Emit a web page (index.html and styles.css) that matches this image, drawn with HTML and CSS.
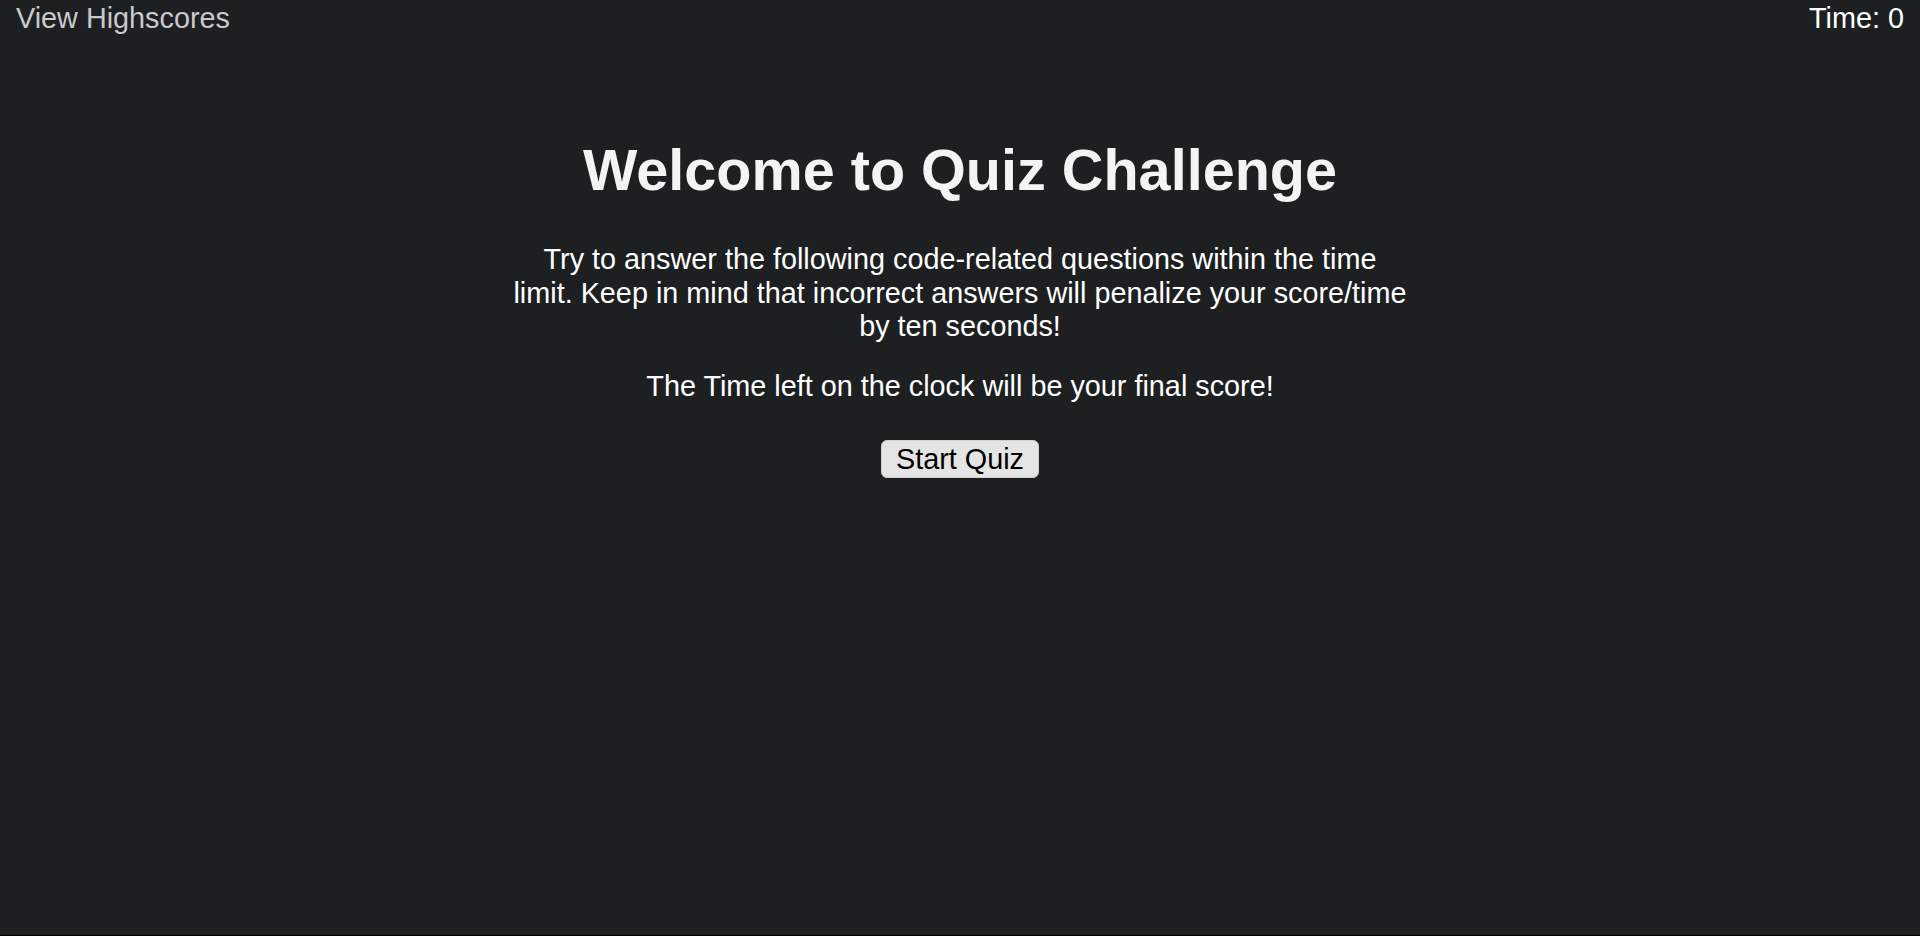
FILE: index.html
```html
<!DOCTYPE html>
<html lang="en">
<head>
<meta charset="utf-8">
<title>Quiz Challenge</title>
<link rel="stylesheet" href="styles.css">
</head>
<body>
<div class="page">
  <header class="topbar">
    <a class="highscores" href="#">View Highscores</a>
    <div class="timer">Time: <span>0</span></div>
  </header>
  <main class="intro">
    <h1 class="title">Welcome to Quiz Challenge</h1>
    <p class="text">Try to answer the following code-related questions within the time limit. Keep in mind that incorrect answers will penalize your score/time by ten seconds!</p>
    <p class="text">The Time left on the clock will be your final score!</p>
    <button class="start" type="button">Start Quiz</button>
  </main>
</div>
</body>
</html>
```
FILE: styles.css
```css
html {
  background: #000;
}
body {
  margin: 0;
  font-family: "Liberation Sans", Arial, sans-serif;
}
.page {
  background: #1e1f21;
  height: 935px;
  overflow: hidden;
}
.topbar {
  display: flex;
  justify-content: space-between;
  align-items: flex-start;
  padding: 2px 16px 0;
  font-size: 28.8px;
  line-height: 33px;
}
.highscores {
  color: #c9c9cb;
  text-decoration: none;
}
.timer {
  color: #ffffff;
}
.intro {
  max-width: 900px;
  margin: 0 auto;
  text-align: center;
  color: #ffffff;
}
.title {
  font-size: 57.6px;
  line-height: 66px;
  font-weight: 700;
  color: #f4f4f4;
  margin: 102px 0 40px;
}
.text {
  font-size: 28.8px;
  line-height: 33.5px;
  margin: 0 0 26px;
}
.start {
  margin-top: 11px;
  font-family: "Liberation Sans", Arial, sans-serif;
  font-size: 28.8px;
  line-height: 34px;
  padding: 1px 14px 1px;
  border: 1px solid #d0d0d0;
  border-radius: 6px;
  background: #e4e4e4;
  color: #000;
}
```
